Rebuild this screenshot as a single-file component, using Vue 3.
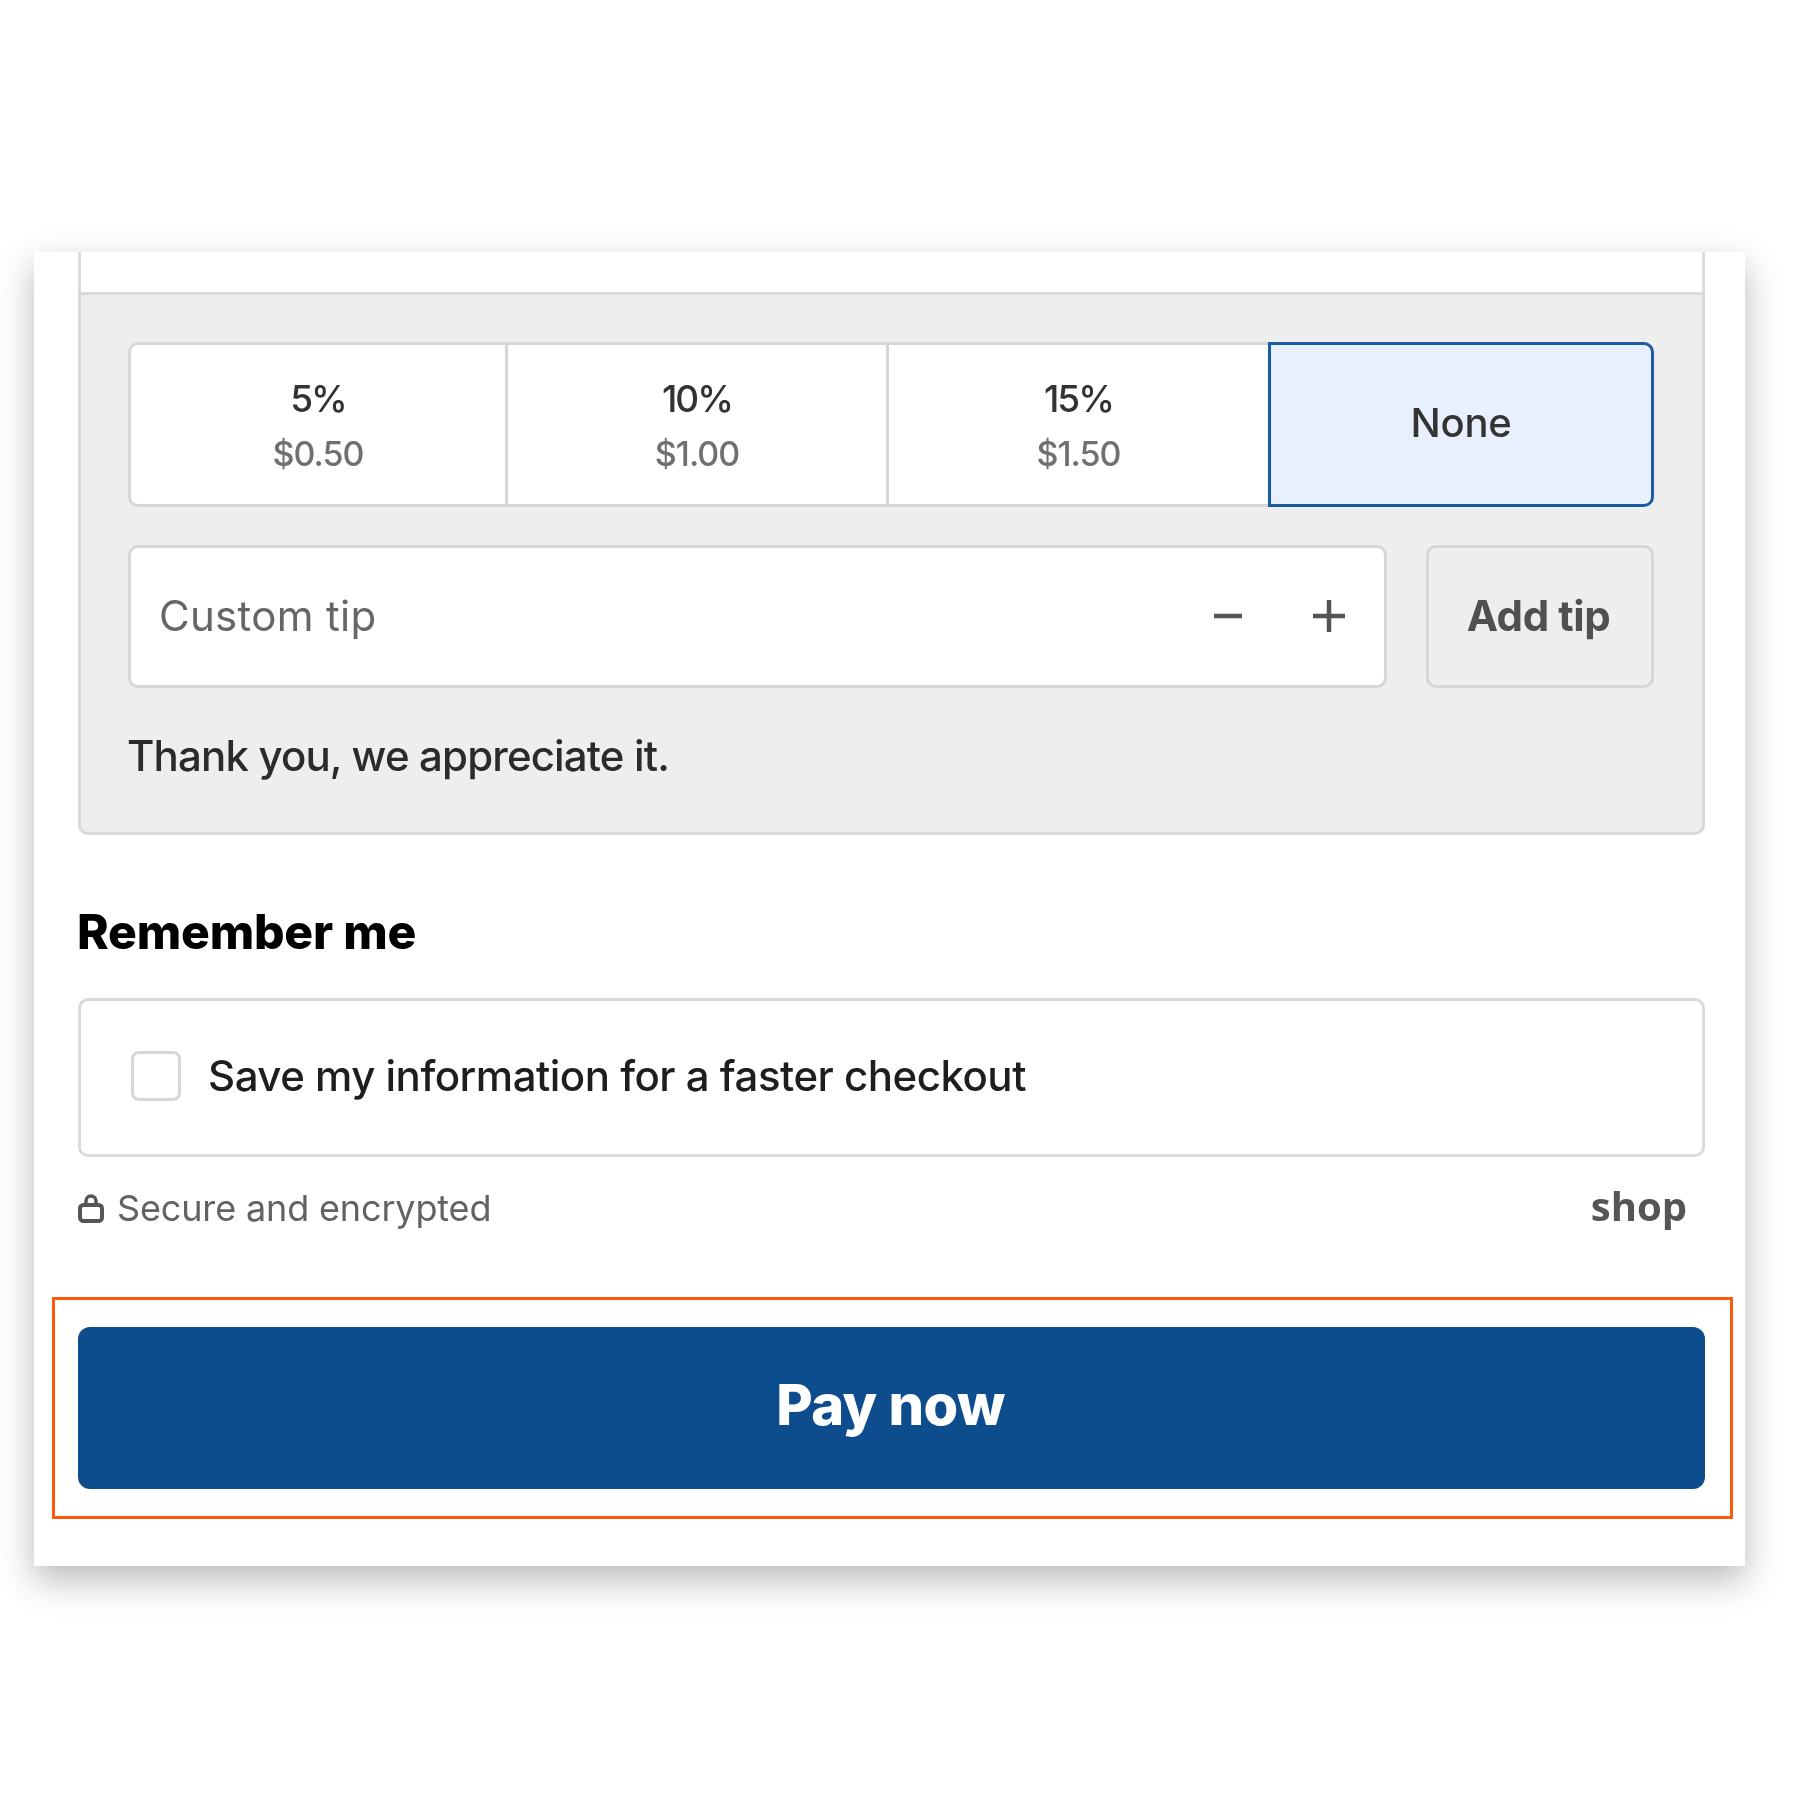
<script setup>
const tips = [
  { pct: '5%', amt: '$0.50', w: 377 },
  { pct: '10%', amt: '$1.00', w: 381 },
  { pct: '15%', amt: '$1.50', w: 382 },
]
</script>

<template>
  <div class="page">
    <div class="card">
      <div class="stub"></div>
      <section class="panel soft">
        <div class="options">
          <div v-for="t in tips" :key="t.pct" class="opt" :style="{ width: t.w + 'px' }">
            <span class="pct">{{ t.pct }}</span>
            <span class="amt">{{ t.amt }}</span>
          </div>
          <div class="opt none"><span class="none-label">None</span></div>
        </div>
        <div class="custom-row">
          <div class="custom">
            <span class="placeholder">Custom tip</span>
            <div class="steppers">
              <svg width="28" height="36" viewBox="0 0 28 36"><path d="M0 18H28" stroke="#555" stroke-width="4.5" /></svg>
              <svg width="32" height="36" viewBox="0 0 32 36"><path d="M0 18H32M16 2V34" stroke="#555" stroke-width="4.5" /></svg>
            </div>
          </div>
          <div class="add">Add tip</div>
        </div>
        <p class="thanks">Thank you, we appreciate it.</p>
      </section>

      <h2 class="remember soft">Remember me</h2>
      <div class="save soft">
        <span class="check"></span>
        <span class="save-label">Save my information for a faster checkout</span>
      </div>

      <div class="secure-row soft">
        <div class="secure">
          <svg width="26" height="30" viewBox="0 0 26 30">
            <path d="M8 12V8a5 5 0 0 1 10 0V12" fill="none" stroke="#555" stroke-width="3.5" />
            <rect x="2" y="12" width="22" height="16" rx="3.5" fill="none" stroke="#555" stroke-width="4" />
          </svg>
          <span>Secure and encrypted</span>
        </div>
        <span class="shop">shop</span>
      </div>

      <div class="highlight">
        <div class="pay soft"><span class="pay-label">Pay now</span></div>
      </div>
    </div>
  </div>
</template>

<style scoped>
.page {
  box-sizing: border-box;
  width: 1800px;
  height: 1800px;
  padding: 252px 55px 0 34px;
  background: #fff;
  font-family: Inter, "Noto Sans", sans-serif;
}
.soft {
  filter: blur(0.7px);
}
.card {
  box-sizing: border-box;
  height: 1314px;
  padding: 0 40px 0 44px;
  background: #fff;
  box-shadow: 0 14px 34px rgba(0, 0, 0, 0.28);
}
.stub {
  height: 40px;
  border: solid #dcdcdc;
  border-width: 0 3px;
}
.panel {
  box-sizing: border-box;
  height: 543px;
  padding: 47px 48px 0 47px;
  background: #eee;
  border: 3px solid #d9d9d9;
  border-radius: 0 0 10px 10px;
}
.options {
  display: flex;
  height: 165px;
}
.opt {
  box-sizing: border-box;
  display: flex;
  flex-direction: column;
  align-items: center;
  justify-content: center;
  background: #fff;
  border: solid #d6d6d6;
  border-width: 3px 0 3px 3px;
}
.opt:first-child {
  border-radius: 10px 0 0 10px;
}
.pct {
  font-size: 37px;
  font-weight: 500;
  line-height: 48px;
  letter-spacing: -2px;
  color: #333;
}
.amt {
  margin-top: 10px;
  font-size: 34px;
  font-weight: 500;
  line-height: 42px;
  letter-spacing: -1px;
  color: #707070;
}
.none {
  flex: 1;
  padding-bottom: 4px;
  background: #e8effd;
  border: 3px solid #1a5c9f;
  border-radius: 0 10px 10px 0;
}
.none-label {
  font-size: 40px;
  font-weight: 500;
  letter-spacing: -0.3px;
  color: #333;
}
.custom-row {
  display: flex;
  gap: 39px;
  height: 143px;
  margin-top: 38px;
}
.custom {
  box-sizing: border-box;
  flex: 1;
  display: flex;
  align-items: center;
  justify-content: space-between;
  padding: 0 39px 2px 28px;
  background: #fff;
  border: 3px solid #d6d6d6;
  border-radius: 10px;
}
.placeholder {
  font-size: 42px;
  letter-spacing: 0.3px;
  color: #666;
}
.steppers {
  display: flex;
  align-items: center;
  gap: 71px;
}
.add {
  box-sizing: border-box;
  width: 228px;
  display: flex;
  align-items: center;
  justify-content: center;
  padding: 0 3px 2px 0;
  border: 3px solid #d6d6d6;
  border-radius: 10px;
  font-size: 42px;
  font-weight: 700;
  letter-spacing: -0.4px;
  color: #505050;
}
.thanks {
  margin: 43px 0 0 -1px;
  font-size: 42px;
  font-weight: 500;
  line-height: 49px;
  letter-spacing: -0.85px;
  color: #2b2b2b;
}
.remember {
  margin: 69px 0 0 -1px;
  height: 57px;
  font-size: 48px;
  line-height: 56px;
  font-weight: 800;
  letter-spacing: -0.2px;
  color: #000;
}
.save {
  box-sizing: border-box;
  display: flex;
  align-items: center;
  gap: 27px;
  height: 159px;
  margin-top: 37px;
  padding: 0 0 4px 50px;
  border: 3px solid #dadada;
  border-radius: 10px;
}
.check {
  box-sizing: border-box;
  width: 50px;
  height: 50px;
  border: 3px solid #d6d6d6;
  border-radius: 8px;
}
.save-label {
  font-size: 42px;
  font-weight: 500;
  letter-spacing: -0.5px;
  color: #1e1e1e;
}
.secure-row {
  display: flex;
  align-items: center;
  justify-content: space-between;
  height: 108px;
  padding: 0 18px 7px 0;
  box-sizing: border-box;
}
.secure {
  display: flex;
  align-items: center;
  gap: 13px;
  font-size: 36px;
  letter-spacing: -0.15px;
  color: #626262;
}
.shop {
  font-family: "Open Sans", sans-serif;
  font-size: 40px;
  font-weight: 700;
  line-height: 40px;
  color: #555;
  margin-top: -3px;
}
.highlight {
  box-sizing: border-box;
  height: 222px;
  margin: 32px -28px 0 -26px;
  padding: 26px 25px 0 23px;
  border: 3px solid #ff5a0a;
}
.pay {
  height: 162px;
  display: flex;
  align-items: center;
  justify-content: center;
  padding: 0 2px 6px 0;
  box-sizing: border-box;
  margin-top: 1px;
  background: #0e4d8d;
  border-radius: 12px;
}
.pay-label {
  font-size: 56px;
  font-weight: 800;
  letter-spacing: -0.5px;
  color: #fff;
}
</style>
